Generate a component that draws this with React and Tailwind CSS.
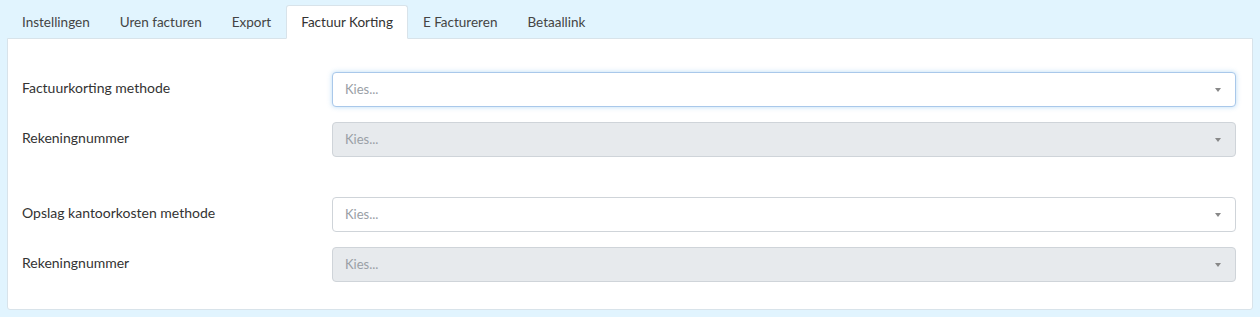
const tabs = ["Instellingen", "Uren facturen", "Export", "Factuur Korting", "E Factureren", "Betaallink"];

function Caret() {
  return (
    <span className="h-0 w-0 border-x-[3.5px] border-t-[4px] border-x-transparent border-t-[#888888]" />
  );
}

function Select({ disabled, focused }) {
  return (
    <div
      className={
        "flex h-[35px] flex-1 items-center justify-between rounded-[4px] border pl-[12px] pr-[14px] " +
        (disabled
          ? "border-[#cfd4d9] bg-[#e7eaed]"
          : focused
            ? "border-[#a9c8ea] bg-white shadow-[0_0_5px_rgba(102,175,233,0.45)]"
            : "border-[#cfd4d9] bg-white")
      }
    >
      <span className="text-[13px] text-[#9aa0a6]">Kies...</span>
      <Caret />
    </div>
  );
}

function Row({ label, disabled, focused }) {
  return (
    <div className="flex items-start">
      <label className="w-[310px] pt-[5px] text-[14px] text-[#333333]">{label}</label>
      <Select disabled={disabled} focused={focused} />
    </div>
  );
}

export default function App() {
  return (
    <div className="min-h-[317px] bg-[#e1f4fe] px-[7px] pb-[7px] pt-[5px]" style={{ fontFamily: "Lato, sans-serif" }}>
      <div className="flex">
        {tabs.map((tab) => {
          const active = tab === "Factuur Korting";
          return (
            <div
              key={tab}
              className={
                "relative -mb-px rounded-t-[3px] border px-[14px] py-[6px] text-[13.5px] leading-[20px] " +
                (active
                  ? "z-10 border-[#d8e3ea] border-b-white bg-white text-[#333333]"
                  : "border-transparent text-[#444444]")
              }
            >
              {tab}
            </div>
          );
        })}
      </div>
      <div className="rounded-b-[3px] border border-[#d8e3ea] bg-white pb-[27px] pl-[14px] pr-[16px] pt-[33px]">
        <div className="flex flex-col gap-[15px]">
          <Row label="Factuurkorting methode" focused />
          <Row label="Rekeningnummer" disabled />
        </div>
        <div className="mt-[40px] flex flex-col gap-[15px]">
          <Row label="Opslag kantoorkosten methode" />
          <Row label="Rekeningnummer" disabled />
        </div>
      </div>
    </div>
  );
}
